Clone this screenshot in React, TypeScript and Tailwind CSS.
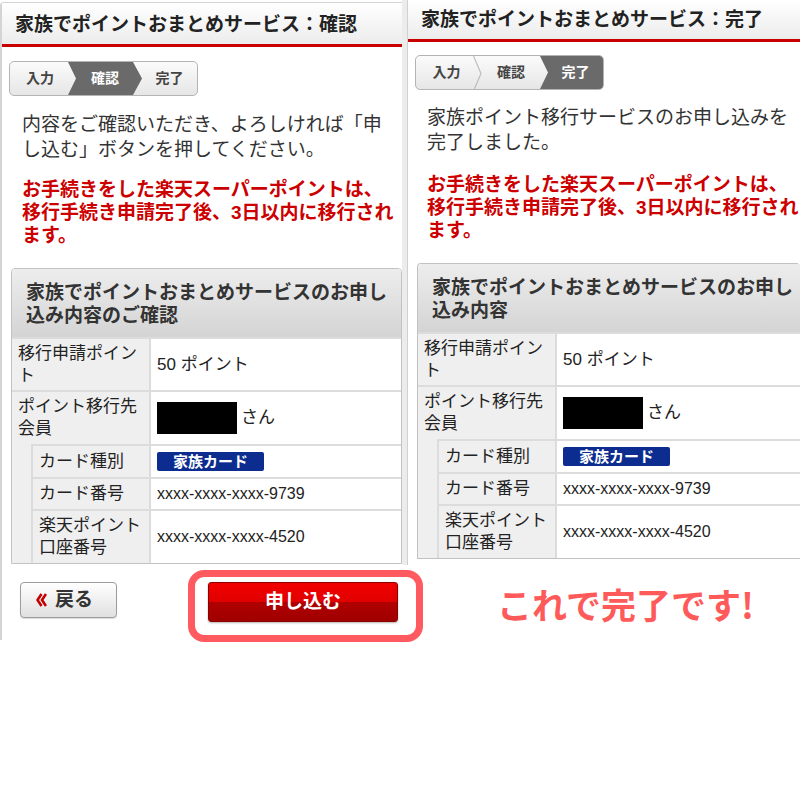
import type { ReactNode } from 'react'

const base = "font-['Liberation_Sans','Noto_Sans_CJK_JP',sans-serif]"

function Header({ title, left }: { title: string; left?: boolean }) {
  return (
    <div
      className={`${left ? 'h-[44px] pt-[10px]' : 'h-[42px] pt-[8px]'} whitespace-nowrap border-b-[3px] border-[#c80000] bg-[linear-gradient(#ffffff,#ececec)] pl-[13px] text-[19px] font-bold leading-[24px] text-[#222]`}
    >
      {title}
    </div>
  )
}

function Steps({ done }: { done?: boolean }) {
  if (done) {
    return (
      <div className="flex h-[35px] w-[189px] overflow-hidden rounded-[5px] border border-[#b4b4b4] bg-[linear-gradient(#fbfbfb,#e6e6e6)] text-[14px] font-bold text-[#444]">
        <div className="flex w-[57px] items-center justify-center pl-[4px]">入力</div>
        <svg width="9" height="35" viewBox="0 0 9 35" className="shrink-0">
          <polyline points="0.5,0 8,17.5 0.5,35" fill="none" stroke="#bdbdbd" strokeWidth="1.2" />
        </svg>
        <div className="flex w-[58px] items-center justify-center">確認</div>
        <div className="flex flex-1 items-center justify-center bg-[#6a6a6a] pl-[8px] text-white [clip-path:polygon(0_0,100%_0,100%_100%,0_100%,8px_50%)]">
          完了
        </div>
      </div>
    )
  }
  return (
    <div className="flex h-[35px] w-[189px] overflow-hidden rounded-[5px] border border-[#b4b4b4] bg-[linear-gradient(#fbfbfb,#e6e6e6)] text-[14px] font-bold text-[#444]">
      <div className="flex w-[58px] items-center justify-center pl-[2px]">入力</div>
      <div className="flex w-[74px] items-center justify-center bg-[#6a6a6a] text-white [clip-path:polygon(0_0,65px_0,74px_50%,65px_100%,0_100%,8px_50%)]">
        確認
      </div>
      <div className="flex flex-1 items-center justify-center">完了</div>
    </div>
  )
}

function Row({
  label,
  children,
  className,
  narrow
}: {
  label: ReactNode
  children: ReactNode
  className: string
  narrow?: boolean
}) {
  return (
    <div className={`flex border-t-2 border-[#dcdcdc] ${className}`}>
      <div
        className={`${narrow ? 'w-[118px]' : 'w-[139px]'} flex shrink-0 items-center whitespace-nowrap border-r-2 border-[#dcdcdc] bg-[#efefef] pl-[6px] text-[17px] leading-[22px] text-[#222]`}
      >
        <div>{label}</div>
      </div>
      <div className="flex flex-1 items-center whitespace-nowrap pl-[6px] text-[17px] text-[#222]">
        {children}
      </div>
    </div>
  )
}

function Detail({ title, open }: { title: ReactNode; open?: boolean }) {
  return (
    <div
      className={`ml-[9px] overflow-hidden rounded-t-[4px] border border-[#c2c2c2] bg-white ${open ? 'border-r-0' : ''}`}
    >
      <div className="h-[68px] whitespace-nowrap bg-[linear-gradient(#ededed,#d4d4d4)] pl-[14px] pt-[12px] text-[19px] font-bold leading-[23px] text-[#333]">
        {title}
      </div>
      <Row label={<>移行申請ポイン<br />ト</>} className="h-[53px]">
        50 ポイント
      </Row>
      <Row label={<>ポイント移行先<br />会員</>} className="h-[54px]">
        <span className="inline-block h-[32px] w-[80px] bg-black" />
        <span className="ml-[4px]">さん</span>
      </Row>
      <div className="flex">
        <div className="w-[21px] shrink-0 border-r-2 border-[#dcdcdc] bg-[#efefef]" />
        <div className="flex-1">
          <Row narrow label="カード種別" className="h-[33px]">
            <span className="flex h-[19px] w-[107px] items-center justify-center rounded-[2px] bg-[#0c2d8f] text-[15px] font-bold leading-none text-white">
              家族カード
            </span>
          </Row>
          <Row narrow label="カード番号" className="h-[32px]">
            <span className="text-[16px]">xxxx-xxxx-xxxx-9739</span>
          </Row>
          <Row narrow label={<>楽天ポイント<br />口座番号</>} className="h-[54px]">
            <span className="text-[16px]">xxxx-xxxx-xxxx-4520</span>
          </Row>
        </div>
      </div>
    </div>
  )
}

export default function App() {
  return (
    <div className={`relative flex h-[800px] w-[800px] items-start overflow-hidden bg-white ${base}`}>
      {/* left: confirm screen */}
      <div className="mt-[2px] h-[638px] w-[402px] shrink-0 rounded-tl-[4px] border-l-2 border-t border-[#d4d4d4]">
        <Header left title="家族でポイントおまとめサービス：確認" />
        <div className="ml-[7px] mt-[14px]">
          <Steps />
        </div>
        <p className="mt-[16px] whitespace-nowrap pl-[20px] text-[19px] leading-[25px] text-[#333]">
          内容をご確認いただき、よろしければ「申
          <br />
          し込む」ボタンを押してください。
        </p>
        <p className="mt-[16px] whitespace-nowrap pl-[20px] text-[19px] font-bold leading-[23px] text-[#cc0000]">
          お手続きをした楽天スーパーポイントは、
          <br />
          移行手続き申請完了後、3日以内に移行され
          <br />
          ます。
        </p>
        <div className="mt-[21px]">
          <Detail
            title={
              <>
                家族でポイントおまとめサービスのお申し
                <br />
                込み内容のご確認
              </>
            }
          />
        </div>
        <div className="mt-[18px] flex items-start">
          <button className="ml-[18px] flex h-[36px] w-[97px] items-center gap-[8px] rounded-[4px] border border-[#9c9c9c] bg-[linear-gradient(#ffffff,#e0e0e0)] pl-[15px] text-[19px] font-bold text-[#333] shadow-[0_1px_1px_rgba(0,0,0,0.15)]">
            <svg width="11" height="14" viewBox="0 0 11 14">
              <path d="M5.5 1 L1.5 7 L5.5 13 M10 1 L6 7 L10 13" fill="none" stroke="#c40000" strokeWidth="2.6" />
            </svg>
            戻る
          </button>
          <button className="ml-[91px] h-[40px] w-[190px] rounded-[3px] border border-[#8c0000] bg-[linear-gradient(#f20000_0%,#e00000_50%,#b00000_50%,#a00000_100%)] text-[19px] font-bold text-white shadow-[0_1px_2px_rgba(0,0,0,0.3)]">
            申し込む
          </button>
        </div>
      </div>

      <div className="h-[565px] w-[5px] shrink-0 bg-[#ececec]" />

      {/* right: done screen */}
      <div className="flex flex-1 flex-col">
        <div className="h-[565px] border-l border-[#d0d0d0]">
          <Header title="家族でポイントおまとめサービス：完了" />
          <div className="ml-[7px] mt-[13px]">
            <Steps done />
          </div>
          <p className="mt-[15px] whitespace-nowrap pl-[19px] text-[19px] leading-[25px] text-[#333]">
            家族ポイント移行サービスのお申し込みを
            <br />
            完了しました。
          </p>
          <p className="mt-[18px] whitespace-nowrap pl-[19px] text-[19px] font-bold leading-[23px] text-[#cc0000]">
            お手続きをした楽天スーパーポイントは、
            <br />
            移行手続き申請完了後、3日以内に移行され
            <br />
            ます。
          </p>
          <div className="mt-[21px]">
            <Detail
              open
              title={
                <>
                  家族でポイントおまとめサービスのお申し
                  <br />
                  込み内容
                </>
              }
            />
          </div>
        </div>
        <div className="ml-[90px] mt-[21px] whitespace-nowrap font-['Noto_Sans_CJK_JP',sans-serif] text-[35px] font-bold leading-[36px] text-[#ff5a5a]">
          これで完了です!
        </div>
      </div>

      {/* annotation frame round the submit button */}
      <div className="absolute left-[188px] top-[570px] h-[72px] w-[235px] rounded-[16px] border-[7px] border-[#ff5a5f]" />
    </div>
  )
}
